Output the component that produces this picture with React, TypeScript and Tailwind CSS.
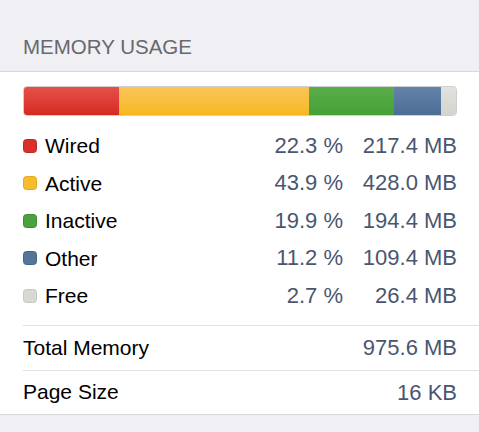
import React from "react";

interface Segment {
    name: string;
    pct: string;
    size: string;
    width: number;
    bar: string;
    swatch: string;
}

const segments: Segment[] = [
    { name: "Wired", pct: "22.3 %", size: "217.4 MB", width: 95, bar: "bg-gradient-to-b from-[#e5504a] to-[#d6281e]", swatch: "bg-[#d9302b] border-[#b52a25]" },
    { name: "Active", pct: "43.9 %", size: "428.0 MB", width: 191, bar: "bg-gradient-to-b from-[#fbc555] to-[#f6b81c]", swatch: "bg-[#f8bb2c] border-[#e3a821]" },
    { name: "Inactive", pct: "19.9 %", size: "194.4 MB", width: 86, bar: "bg-gradient-to-b from-[#5aae4b] to-[#45a035]", swatch: "bg-[#4aa23c] border-[#3d8b31]" },
    { name: "Other", pct: "11.2 %", size: "109.4 MB", width: 47, bar: "bg-gradient-to-b from-[#6383a9] to-[#4d6d95]", swatch: "bg-[#557599] border-[#456487]" },
    { name: "Free", pct: "2.7 %", size: "26.4 MB", width: 15, bar: "bg-gradient-to-b from-[#e2e3dd] to-[#d3d4cc]", swatch: "bg-[#d8d9d2] border-[#c6c7bf]" },
];

export default function App() {
    return (
        <div className="w-[479px] h-[432px] bg-[#efeff4] font-['Liberation_Sans',Arial,sans-serif] overflow-hidden">
            {/* section header */}
            <div className="h-[71px] flex items-end pl-[23px] pb-[14px]">
                <span className="text-[20.5px] text-[#68686d] leading-none">MEMORY USAGE</span>
            </div>

            <div className="bg-white border-t border-b border-[#d8d8dc]">
                <div className="pl-[23px] pr-[22px] pt-[14px] pb-[10px]">
                    {/* usage bar */}
                    <div className="flex h-[30px] rounded-[4px] overflow-hidden border border-[#00000030]">
                        {segments.map((s) => (
                            <div key={s.name} className={s.bar} style={{ width: s.width }} />
                        ))}
                    </div>

                    <div className="mt-[11px]">
                        {segments.map((s) => (
                            <div key={s.name} className="flex items-center h-[37.5px] text-[21px] leading-none">
                                <div className={`w-[14px] h-[14px] rounded-[3.5px] border ${s.swatch}`} />
                                <span className="ml-[8px] text-black flex-1">{s.name}</span>
                                <span className="w-[80px] text-right text-[22px] text-[#4a5670]">{s.pct}</span>
                                <span className="w-[114px] text-right text-[22px] text-[#4a5670]">{s.size}</span>
                            </div>
                        ))}
                    </div>
                </div>

                <div className="pl-[23px]">
                    <div className="flex items-center justify-between h-[45px] border-t border-[#e0e0e4] pr-[22px] text-[21px]">
                        <span className="text-black">Total Memory</span>
                        <span className="text-[22px] text-[#4a5670]">975.6 MB</span>
                    </div>
                    <div className="flex items-center justify-between h-[44px] border-t border-[#e0e0e4] pr-[22px] text-[21px]">
                        <span className="text-black">Page Size</span>
                        <span className="text-[22px] text-[#4a5670]">16 KB</span>
                    </div>
                </div>
            </div>
        </div>
    );
}
